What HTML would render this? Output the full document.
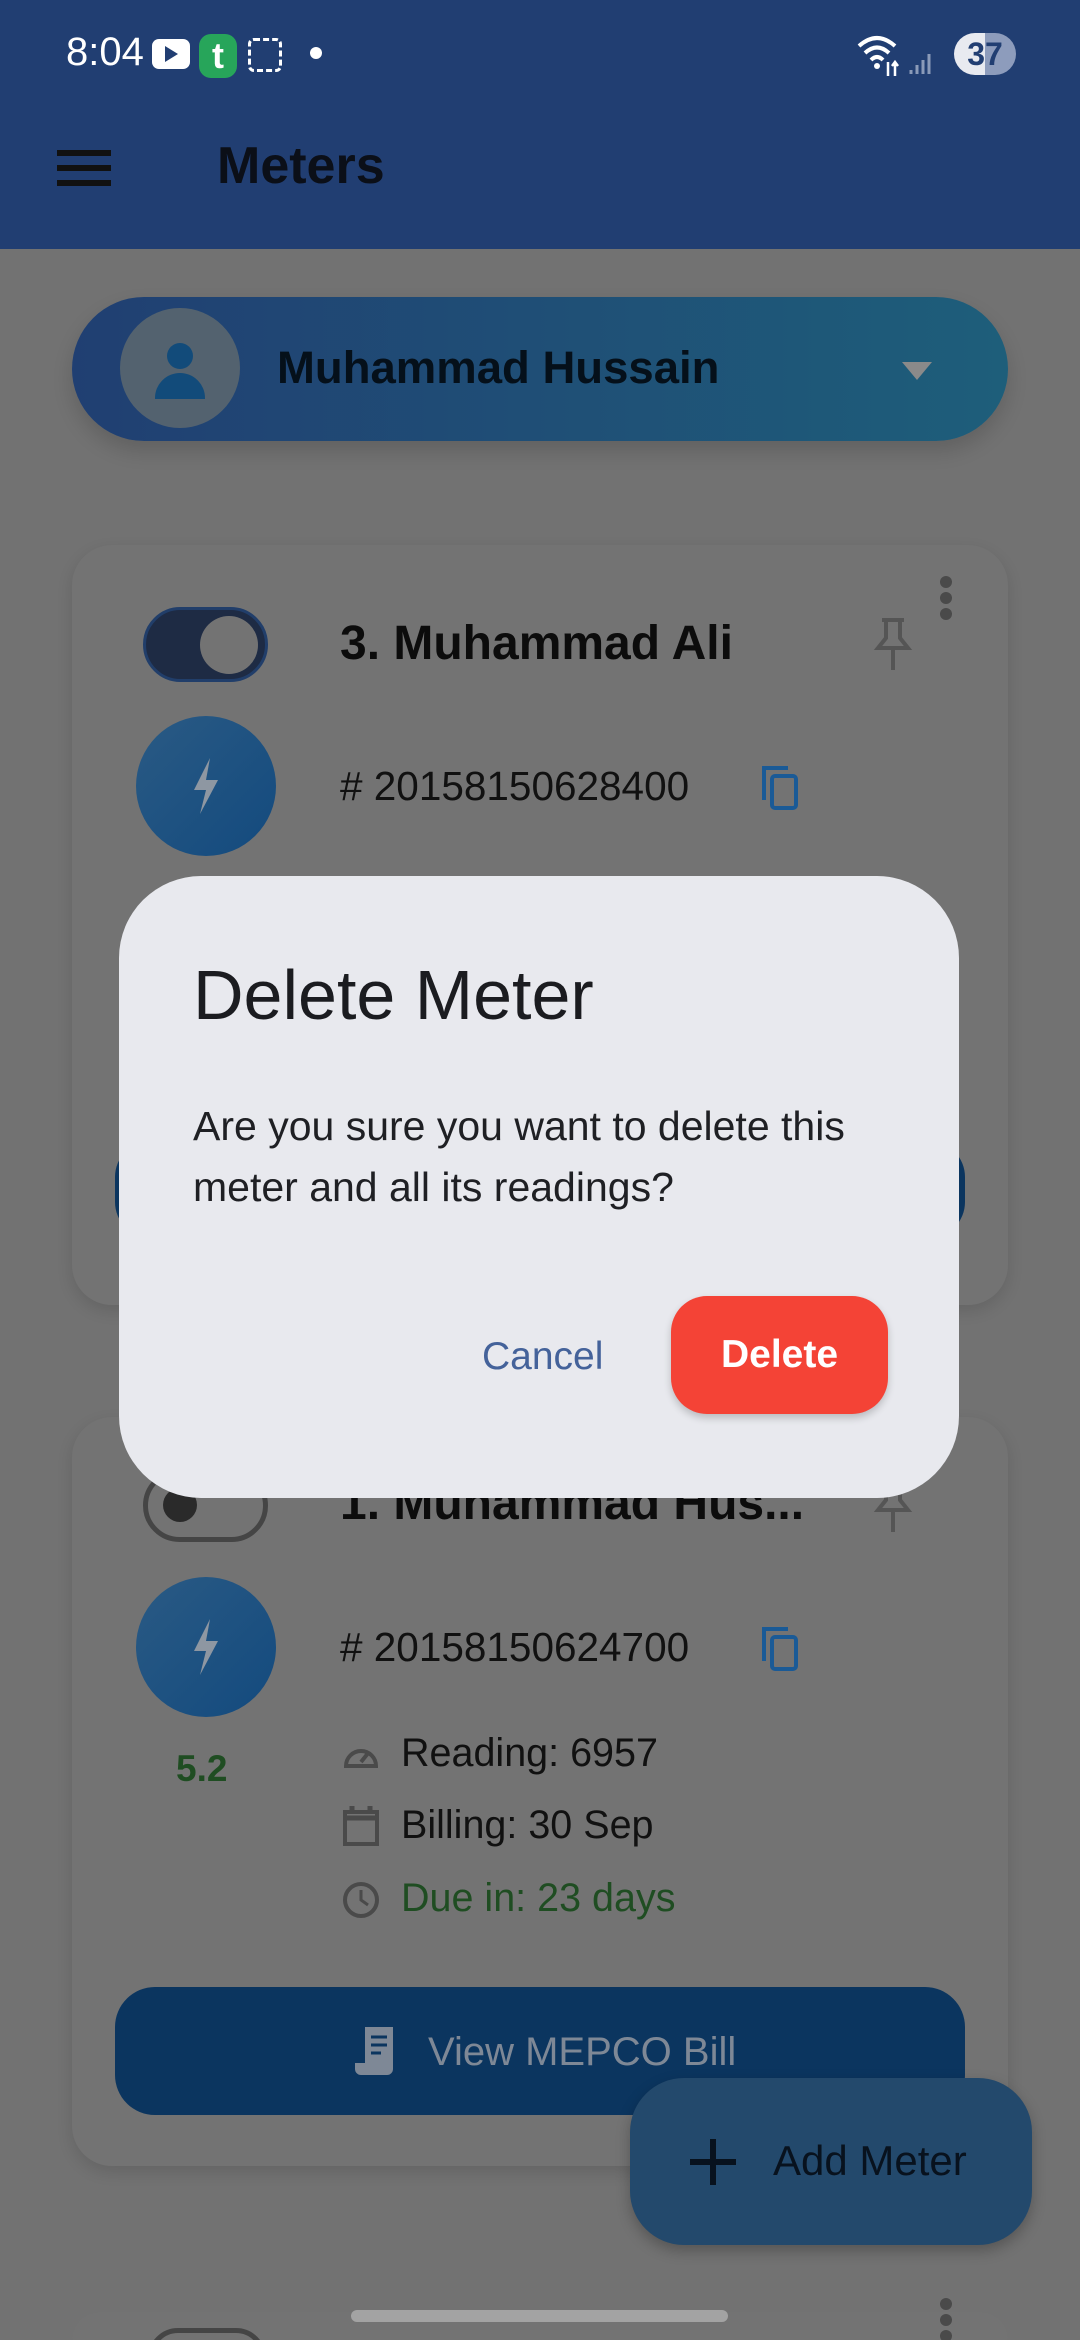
<!DOCTYPE html>
<html><head><meta charset="utf-8"><style>
*{margin:0;padding:0;box-sizing:border-box}
html,body{width:1080px;height:2340px;overflow:hidden}
body{background:#727272;font-family:"Liberation Sans",sans-serif;position:relative}
.a{position:absolute}
.t{position:absolute;white-space:nowrap;line-height:1}
</style></head><body>
<!-- app bar -->
<div class="a" style="left:0;top:0;width:1080px;height:249px;background:#213e72"></div>
<div class="t" style="left:66px;top:32px;font-size:40px;color:#fff;font-family:'Liberation Sans Narrow','Liberation Sans',sans-serif">8:04</div>
<div class="a" style="left:152px;top:39px;width:38px;height:30px;background:#fff;border-radius:7px"></div>
<div class="a" style="left:165px;top:46px;border-left:13px solid #213e72;border-top:8px solid transparent;border-bottom:8px solid transparent"></div>
<div class="a" style="left:199px;top:34px;width:38px;height:44px;background:#27a55a;border-radius:12px;color:#fff;font-weight:bold;font-size:36px;text-align:center;line-height:44px">t</div>
<div class="a" style="left:248px;top:38px;width:34px;height:34px;border:3px dashed #fff;border-radius:6px"></div>
<div class="a" style="left:310px;top:47px;width:12px;height:12px;background:#fff;border-radius:50%"></div>
<svg class="a" style="left:855px;top:32px" width="120" height="50" viewBox="0 0 120 50"><path d="M4 14 Q22 -2 40 14 M10 21 Q22 10 34 21 M16 28 Q22 22 28 28" stroke="#fff" stroke-width="4" fill="none"/><circle cx="22" cy="34" r="3" fill="#fff"/><path d="M33 30v14 M40 44V30 M37 34l3-4 3 4" stroke="#fff" stroke-width="2.5" fill="none"/><path d="M56 42v-4 M62 42v-9 M68 42v-14 M74 42v-20" stroke="#8a9ab8" stroke-width="3"/></svg>
<div class="a" style="left:954px;top:33px;width:62px;height:42px;border-radius:21px;background:linear-gradient(90deg,#e8eaf0 50%,#8d9cbc 50%);color:#213e72;font-size:32px;font-family:'Liberation Sans Narrow',sans-serif;text-align:center;line-height:42px;font-weight:bold">37</div>
<div class="a" style="left:57px;top:150px;width:54px;height:6px;background:#111"></div>
<div class="a" style="left:57px;top:165px;width:54px;height:6px;background:#111"></div>
<div class="a" style="left:57px;top:180px;width:54px;height:6px;background:#111"></div>
<div class="t" style="left:217px;top:140px;font-size:52px;font-weight:bold;color:#0b0f18">Meters</div>

<!-- profile pill -->
<div class="a" style="left:72px;top:297px;width:936px;height:144px;border-radius:72px;background:linear-gradient(90deg,#203f72,#1e5e7a);box-shadow:0 10px 20px rgba(0,0,0,.15)"></div>
<div class="a" style="left:120px;top:308px;width:120px;height:120px;border-radius:50%;background:#53626f"></div>
<div class="a" style="left:167px;top:343px;width:26px;height:26px;border-radius:50%;background:#124b7a"></div>
<div class="a" style="left:155px;top:373px;width:50px;height:26px;border-radius:25px 25px 0 0;background:#124b7a"></div>
<div class="t" style="left:277px;top:345px;font-size:45.5px;font-weight:bold;color:#05101a">Muhammad Hussain</div>
<div class="a" style="left:902px;top:362px;border-top:18px solid #8a8a8a;border-left:15px solid transparent;border-right:15px solid transparent"></div>

<!-- card 1 -->
<div class="a" style="left:72px;top:545px;width:936px;height:760px;border-radius:40px;background:#737373;box-shadow:0 6px 16px rgba(0,0,0,.12)"></div>
<div class="a" style="left:143px;top:607px;width:125px;height:75px;border-radius:38px;background:#1e2b44;border:3px solid #213e6a"></div>
<div class="a" style="left:200px;top:616px;width:58px;height:58px;border-radius:50%;background:#737373"></div>
<div class="t" style="left:340px;top:620px;font-size:48px;font-weight:bold;color:#0c0c0c">3. Muhammad Ali</div>
<svg class="a" style="left:870px;top:616px" width="46" height="56" viewBox="0 0 46 56"><path d="M12 4h22M16 4v18l-8 10h30l-8-10V4M23 32v22" stroke="#555" stroke-width="4" fill="none"/></svg>
<div class="a" style="left:940px;top:576px;width:12px;height:12px;border-radius:50%;background:#4a4a4a;box-shadow:0 16px 0 #4a4a4a,0 32px 0 #4a4a4a"></div>
<div class="a" style="left:136px;top:716px;width:140px;height:140px;border-radius:50%;background:linear-gradient(135deg,#2a5a84,#134a7e)"></div>
<svg class="a" style="left:186px;top:756px" width="40" height="60" viewBox="0 0 40 60"><path d="M24 2L8 34h12L14 58 32 24H20z" fill="#8e97a2"/></svg>
<div class="t" style="left:340px;top:766px;font-size:40.5px;color:#111">#&nbsp;20158150628400</div>
<svg class="a" style="left:758px;top:764px" width="44" height="48" viewBox="0 0 44 48"><path d="M6 36V4h24" stroke="#1a5a96" stroke-width="4" fill="none"/><rect x="14" y="12" width="24" height="32" rx="3" stroke="#1a5a96" stroke-width="4" fill="none"/></svg>
<div class="a" style="left:115px;top:1141px;width:850px;height:97px;border-radius:36px;background:#0b355f"></div>

<!-- card 2 -->
<div class="a" style="left:72px;top:1417px;width:936px;height:749px;border-radius:40px;background:#737373;box-shadow:0 6px 16px rgba(0,0,0,.12)"></div>
<div class="a" style="left:143px;top:1469px;width:125px;height:73px;border-radius:37px;border:5px solid #454545"></div>
<div class="a" style="left:163px;top:1488px;width:34px;height:34px;border-radius:50%;background:#2a2a2a"></div>
<div class="t" style="left:340px;top:1480px;font-size:48px;font-weight:bold;color:#0c0c0c">1. Muhammad Hus...</div>
<svg class="a" style="left:870px;top:1478px" width="46" height="56" viewBox="0 0 46 56"><path d="M12 4h22M16 4v18l-8 10h30l-8-10V4M23 32v22" stroke="#555" stroke-width="4" fill="none"/></svg>
<div class="a" style="left:136px;top:1577px;width:140px;height:140px;border-radius:50%;background:linear-gradient(135deg,#2a5a84,#134a7e)"></div>
<svg class="a" style="left:186px;top:1617px" width="40" height="60" viewBox="0 0 40 60"><path d="M24 2L8 34h12L14 58 32 24H20z" fill="#8e97a2"/></svg>
<div class="t" style="left:176px;top:1750px;font-size:37px;font-weight:bold;color:#1f4d22">5.2</div>
<div class="t" style="left:340px;top:1627px;font-size:40.5px;color:#111">#&nbsp;20158150624700</div>
<svg class="a" style="left:758px;top:1625px" width="44" height="48" viewBox="0 0 44 48"><path d="M6 36V4h24" stroke="#1a5a96" stroke-width="4" fill="none"/><rect x="14" y="12" width="24" height="32" rx="3" stroke="#1a5a96" stroke-width="4" fill="none"/></svg>
<svg class="a" style="left:341px;top:1734px" width="40" height="40" viewBox="0 0 40 40"><path d="M5 32a15 15 0 1 1 30 0z" stroke="#4a4a4a" stroke-width="4" fill="none"/><path d="M20 28l8-10" stroke="#4a4a4a" stroke-width="4"/></svg>
<div class="t" style="left:401px;top:1734px;font-size:39.5px;color:#111">Reading: 6957</div>
<svg class="a" style="left:341px;top:1804px" width="40" height="44" viewBox="0 0 40 44"><rect x="4" y="8" width="32" height="32" stroke="#4a4a4a" stroke-width="4" fill="none"/><path d="M4 14h32M11 2v8M29 2v8" stroke="#4a4a4a" stroke-width="5"/></svg>
<div class="t" style="left:401px;top:1806px;font-size:39.5px;color:#111">Billing: 30 Sep</div>
<svg class="a" style="left:341px;top:1880px" width="40" height="40" viewBox="0 0 40 40"><circle cx="20" cy="20" r="16" stroke="#4a4a4a" stroke-width="4" fill="none"/><path d="M20 10v10l7 5" stroke="#4a4a4a" stroke-width="3" fill="none"/></svg>
<div class="t" style="left:401px;top:1879px;font-size:39.5px;color:#1f4d22">Due in: 23 days</div>
<div class="a" style="left:115px;top:1987px;width:850px;height:128px;border-radius:40px;background:#0b355f"></div>
<svg class="a" style="left:355px;top:2025px" width="42" height="52" viewBox="0 0 42 52"><path d="M10 2h28v42a6 6 0 0 1-6 6H6a6 6 0 0 1-6-6v-6h10z" fill="#7e8896"/><path d="M16 12h16M16 20h16M16 28h10" stroke="#0b355f" stroke-width="3"/></svg>
<div class="t" style="left:428px;top:2032px;font-size:40px;color:#7e8896">View MEPCO Bill</div>

<!-- FAB -->
<div class="a" style="left:630px;top:2078px;width:402px;height:167px;border-radius:54px;background:#23496c;box-shadow:0 6px 14px rgba(0,0,0,.25)"></div>
<div class="a" style="left:690px;top:2159px;width:46px;height:6px;background:#08121e"></div>
<div class="a" style="left:710px;top:2139px;width:6px;height:46px;background:#08121e"></div>
<div class="t" style="left:773px;top:2140px;font-size:42px;color:#08121e">Add Meter</div>

<!-- card 3 top -->
<div class="a" style="left:72px;top:2312px;width:936px;height:28px;border-radius:40px 40px 0 0;background:#737373"></div>
<div class="a" style="left:148px;top:2328px;width:118px;height:60px;border-radius:30px;border:5px solid #454545"></div>
<div class="a" style="left:940px;top:2298px;width:12px;height:12px;border-radius:50%;background:#4a4a4a;box-shadow:0 16px 0 #4a4a4a,0 32px 0 #4a4a4a"></div>
<div class="a" style="left:351px;top:2310px;width:377px;height:12px;border-radius:6px;background:#a3a3a3"></div>

<!-- dialog -->
<div class="a" style="left:119px;top:876px;width:840px;height:622px;border-radius:82px;background:#e8e9ee"></div>
<div class="t" style="left:193px;top:960px;font-size:70px;color:#1b1c20">Delete Meter</div>
<div class="a" style="left:193px;top:1096px;font-size:41px;line-height:61px;color:#1f2024;width:720px">Are you sure you want to delete this meter and all its readings?</div>
<div class="t" style="left:482px;top:1337px;font-size:39px;color:#44629a">Cancel</div>
<div class="a" style="left:671px;top:1296px;width:217px;height:118px;border-radius:36px;background:#f44336;box-shadow:0 4px 8px rgba(0,0,0,.2);color:#fff;font-size:39px;font-weight:bold;text-align:center;line-height:118px">Delete</div>
</body></html>
